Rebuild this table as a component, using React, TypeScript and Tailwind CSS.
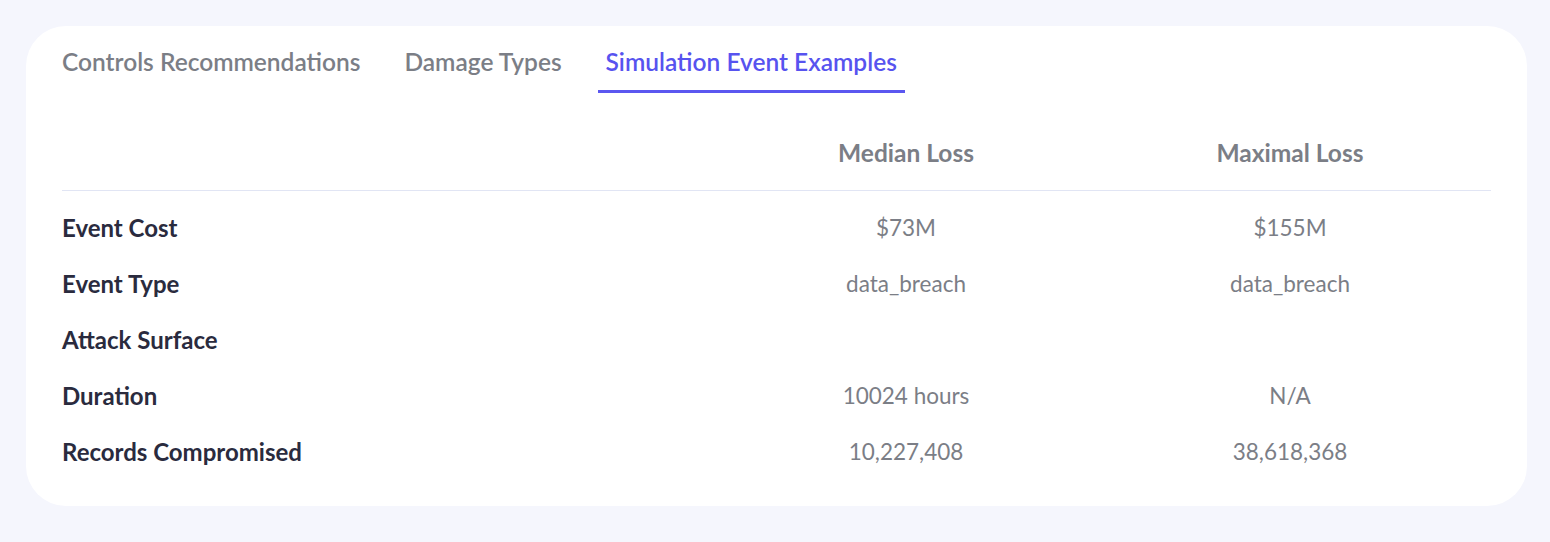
import React from "react";

const rows: [string, string, string][] = [
  ["Event Cost", "$73M", "$155M"],
  ["Event Type", "data_breach", "data_breach"],
  ["Attack Surface", "", ""],
  ["Duration", "10024 hours", "N/A"],
  ["Records Compromised", "10,227,408", "38,618,368"],
];

export default function App() {
  return (
    <div
      className="w-[1550px] h-[542px] bg-[#f5f6fd] p-[26px] pr-[23px]"
      style={{ fontFamily: "Lato, 'Open Sans', sans-serif" }}
    >
      <div className="bg-white rounded-[40px] px-[36px] pt-[22px] pb-[26px]">
        <div className="flex gap-[28px] -ml-[8px] text-[24.5px] font-semibold leading-[28px]">
          <div className="px-[8px] pb-[14px] border-b-[3px] border-transparent text-[#7b7e86]">
            Controls Recommendations
          </div>
          <div className="px-[8px] pb-[14px] border-b-[3px] border-transparent text-[#7b7e86]">
            Damage Types
          </div>
          <div className="px-[8px] pb-[14px] border-b-[3px] border-[#5b57f0] text-[#5753ef]">
            Simulation Event Examples
          </div>
        </div>
        <div className="mt-[46px] w-[1429px]">
          <div className="grid grid-cols-[652px_384px_384px] pb-[23px] border-b border-[#e1e5f4] text-[24.5px] leading-[28px] font-bold text-[#7b7e86]">
            <div></div>
            <div className="text-center">Median Loss</div>
            <div className="text-center">Maximal Loss</div>
          </div>
          <div className="pt-[9px]">
            {rows.map(([label, a, b]) => (
              <div
                key={label}
                className="grid grid-cols-[652px_384px_384px] h-[56px] items-center leading-[28px]"
              >
                <div className="font-bold text-[24px] text-[#2a2b3e]">{label}</div>
                <div className="text-center text-[22.5px] text-[#7b7e86]">{a}</div>
                <div className="text-center text-[22.5px] text-[#7b7e86]">{b}</div>
              </div>
            ))}
          </div>
        </div>
      </div>
    </div>
  );
}
